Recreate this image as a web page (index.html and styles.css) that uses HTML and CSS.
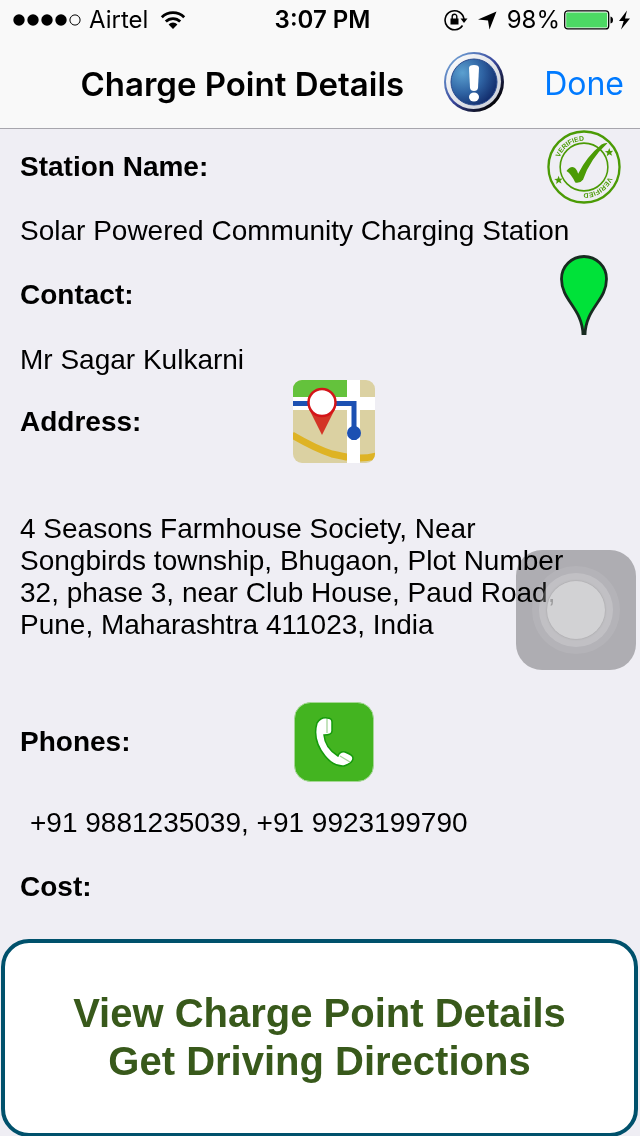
FILE: index.html
```html
<!DOCTYPE html>
<html lang="en">
<head>
<meta charset="utf-8">
<meta name="viewport" content="width=device-width, initial-scale=1">
<title>Charge Point Details</title>
<link rel="stylesheet" href="styles.css">
</head>
<body>
<div class="screen">
  <header class="top">
    <div class="status">
      <div class="status-left">
        <svg class="signal" width="68" height="14" viewBox="0 0 68 14"><circle cx="6" cy="7" r="5.7"/><circle cx="20" cy="7" r="5.7"/><circle cx="34" cy="7" r="5.7"/><circle cx="48" cy="7" r="5.7"/><circle cx="62" cy="7" r="5.1" fill="none" stroke="#000"/></svg>
        <span>Airtel</span>
        <svg class="wifi" width="26" height="20" viewBox="0 0 26 20"><g fill="none" stroke="#000" stroke-width="2.8"><path d="M1.8 7.2a16 16 0 0 1 22.4 0"/><path d="M5.8 11.6a10.2 10.2 0 0 1 14.4 0"/></g><path d="M8.6 14.4a6.3 6.3 0 0 1 8.8 0L13 19z"/></svg>
      </div>
      <time class="clock">3:07 PM</time>
      <div class="status-right">
        <svg width="24" height="22" viewBox="0 0 24 22"><path d="M18.5 16.5A9.5 9.5 0 1 1 20 10" fill="none" stroke="#000" stroke-width="1.6"/><path d="M16.500 9.500h7l-3.500 4.500z"/><rect x="6.500" y="9.500" width="8" height="6"/><path d="M8.200 10V7.500a2.300 2.300 0 0 1 4.600 0V10" fill="none" stroke="#000" stroke-width="1.400"/></svg>
        <svg class="arrow" width="19" height="19" viewBox="0 0 19 19"><path d="M18.500.5 11.500 18.500 10 9.500 0 8.500z"/></svg>
        <span>98%</span>
        <svg class="battery" width="68" height="20" viewBox="0 0 68 20"><rect x=".7" y=".9" width="44" height="18" rx="3" fill="#fff" stroke="#000" stroke-width="1.3"/><rect x="2.200" y="2.400" width="41" height="15" rx="1" fill="#4cd964"/><path d="M46.500 6.500q2.500.5 2.500 3.500t-2.500 3.500z"/><path d="M63 .5 55 11h4.700L57 19.500 66 8.500h-5z"/></svg>
      </div>
    </div>
    <nav class="nav">
      <h1 class="title">Charge Point Details</h1>
      <button class="info" type="button" aria-label="Information">
        <svg width="60" height="60" viewBox="0 0 60 60">
          <defs>
            <linearGradient id="rim" x1="0" y1="0" x2="1" y2="1"><stop offset="0" stop-color="#80b9e3"/><stop offset=".5" stop-color="#37459b"/><stop offset=".85" stop-color="#050508"/></linearGradient>
            <linearGradient id="ring" x1="0" y1="0" x2="1" y2="1"><stop offset="0" stop-color="#fff"/><stop offset="1" stop-color="#c8ccd6"/></linearGradient>
            <radialGradient id="disc" cx=".25" cy=".3" r=".8"><stop offset="0" stop-color="#5ba0d0"/><stop offset=".55" stop-color="#2f63a3"/><stop offset="1" stop-color="#122d6d"/></radialGradient>
          </defs>
          <circle cx="30" cy="30" r="30" fill="url(#rim)"/><circle cx="29.500" cy="29.500" r="27.500" fill="url(#ring)"/>
          <circle cx="30" cy="30" r="23" fill="url(#disc)" stroke="#294a8e" stroke-width="1"/>
          <path d="M25 16q0-3 5-3t5 3l-1 20q-.5 3-4 3t-4-3z" fill="#fff"/><ellipse cx="30" cy="45" rx="5" ry="4.500" fill="#fff"/>
        </svg>
      </button>
      <a class="done" href="#">Done</a>
    </nav>
  </header>

  <main class="details">
    <section class="station">
      <div class="head">
        <h2>Station Name:</h2>
        <svg class="side" width="74" height="74" viewBox="0 0 76 76" role="img" aria-label="Verified">
          <g fill="none" stroke="#4b9b05"><circle cx="38" cy="38" r="36.500" stroke-width="2.400"/><circle cx="38" cy="38" r="24.500" stroke-width="1.600"/></g>
          <path id="arc" d="M11 38a27 27 0 0 1 54 0a27 27 0 0 1-54 0a27 27 0 0 1 54 0" fill="none"/>
          <g class="seal"><text><textPath href="#arc" startOffset="10">VERIFIED</textPath></text><text><textPath href="#arc" startOffset="95">VERIFIED</textPath></text></g>
          <g fill="#4b9b05"><path d="m64 18.500 1 3 3-.2-2.200 2.200 1.200 3-3-1.500-2.600 2 .6-3.300-2.600-1.800 3.300-.4z"/><path d="m12 47 1 3 3-.2-2.200 2.200 1.200 3-3-1.500-2.600 2 .6-3.300-2.600-1.800 3.300-.4z"/>
          <path d="M20 42q3-4 6-4 4 0 6 7 9-18 24-30 3-2 6-1.500Q44 30 37 51q-3 4-8 3-4-9-9-12z"/></g>
        </svg>
      </div>
      <p>Solar Powered Community Charging Station</p>
    </section>

    <section class="contact">
      <div class="head">
        <h2>Contact:</h2>
        <svg class="side" width="48" height="80" viewBox="0 0 48 80"><path d="M23 80C22.500 53 1.500 46 1.500 24a22.500 22.500 0 0 1 45 0C46.500 46 25.500 53 25 80" fill="#00e239" stroke="#182b20" stroke-width="2.800"/></svg>
      </div>
      <p>Mr Sagar Kulkarni</p>
    </section>

    <section class="address">
      <div class="head">
        <h2>Address:</h2>
        <button class="tile" type="button" aria-label="Show on map">
          <svg width="84" height="84" viewBox="0 0 84 84">
            <clipPath id="round"><rect x="1" width="82" height="83" rx="9"/></clipPath>
            <g clip-path="url(#round)"><rect width="84" height="84" fill="#dbd1a2"/><path d="M0 0h55v17H0z" fill="#64c23c"/><path d="M0 17h84v13H0zM55 0h13v84H55z" fill="#fff"/>
            <path d="M0 55q24 14 40 19 14 3 15 3M68 78q8 0 16-2" fill="none" stroke="#deb324" stroke-width="7"/></g>
            <path d="M1 23.500h61V60" fill="none" stroke="#1c50b2" stroke-width="5"/><circle cx="62" cy="53" r="7" fill="#1c50b2"/>
            <path d="M17 29 30 55l13-26z" fill="#d33526"/><circle cx="30" cy="22.500" r="13.500" fill="#fff" stroke="#d41418" stroke-width="2.500"/>
          </svg>
        </button>
      </div>
      <p>4 Seasons Farmhouse Society, Near Songbirds township, Bhugaon, Plot Number 32, phase 3, near Club House, Paud Road, Pune, Maharashtra 411023, India</p>
    </section>

    <section class="phones">
      <div class="head">
        <h2>Phones:</h2>
        <button class="tile" type="button" aria-label="Call">
          <svg width="80" height="80" viewBox="0 0 80 80"><rect x=".5" y=".5" width="79" height="79" rx="16" fill="#43b420" stroke="#a5d795"/><path d="M23 21Q27 15 33 16q5 0 5 4v9q0 4-8 4 1 13 14 21 2-5 7-4 8 3 8 6 0 5-9 8-10 1-19-10Q18 38 23 21z" fill="#fff" stroke="#159a0b" stroke-width="1.500"/><path d="M33 17v14M46 54l10 6" stroke="#a5d59a" stroke-width="1.300"/></svg>
        </button>
      </div>
      <p>+91 9881235039, +91 9923199790</p>
    </section>

    <section class="cost"><h2>Cost:</h2></section>
  </main>

  <button class="actions" type="button">View Charge Point Details<br>Get Driving Directions</button>

  <button class="assist" type="button" aria-label="AssistiveTouch"><span class="halo"><span class="ring"><span class="knob"></span></span></span></button>
</div>
</body>
</html>
```
FILE: styles.css
```css
* { box-sizing: border-box; }
body {
  margin: 0;
  background: #efeef4;
  color: #000;
  font: 28px/32px "Liberation Sans", Helvetica, Arial, sans-serif;
}
h1, h2, p { margin: 0; }
svg { display: block; flex: none; }
button { padding: 0; border: 0; background: none; font: inherit; cursor: pointer; }
.screen { position: relative; display: flex; flex-direction: column; min-height: 100vh; }

.top {
  background: #f9f9f9;
  border-bottom: 1px solid #a7a6ad;
  font-family: Inter, Roboto, sans-serif;
}
.status {
  display: grid;
  grid-template-columns: 1fr auto 1fr;
  align-items: center;
  height: 40px;
  padding: 0 8px 0 13px;
  font-size: 24px;
}
.status-left, .status-right { display: flex; align-items: center; }
.status-left { gap: 8px; }
.wifi { margin-left: 4px; }
.clock { font-weight: 600; }
.status-right { justify-content: flex-end; gap: 4px; }
.arrow { margin: 0 6px; }
.nav {
  display: flex;
  align-items: center;
  justify-content: flex-end;
  gap: 40px;
  height: 88px;
  padding: 0 16px 4px;
}
.title { padding-top: 4px; font-size: 33px; font-weight: 600; line-height: 40px; }
.done { padding-top: 4px; color: #007aff; font-size: 32px; line-height: 40px; text-decoration: none; }

.details { flex: 1; padding: 1px 16px 0 20px; }
.head {
  display: grid;
  grid-template-columns: 45% 84px 1fr 80px;
  align-items: center;
}
h2 { font-size: 28px; font-weight: 700; line-height: 32px; }
.tile, .side { justify-self: center; }
.side { grid-column: 4; }
.head h2 { grid-row: 1; grid-column: 1; }
.seal { fill: #4b9b05; font: 700 7px "Liberation Sans", sans-serif; }
.station p { padding: 11px 0 8px; }
.contact p { padding: 9px 0 4px; }
.address p { padding: 49px 16px 61px 0; }
.phones p { padding: 25px 0 32px 10px; }

.actions {
  margin: 36px 2px 0 1px;
  padding: 46px 16px 48px;
  border: 4px solid #00516c;
  border-radius: 28px;
  background: #fff;
  color: #38591b;
  font-size: 40px;
  font-weight: 700;
  line-height: 48px;
}

.assist {
  position: absolute;
  right: 4px;
  top: 550px;
  display: grid;
  place-items: center;
  width: 120px;
  height: 120px;
}
/* Multiplied so that the text under the panel stays dark. */
.assist::before {
  content: "";
  position: absolute;
  inset: 0;
  border-radius: 26px;
  background: #bababa;
  mix-blend-mode: multiply;
}
.halo, .ring, .knob { display: grid; place-items: center; border-radius: 50%; }
.halo { position: relative; width: 88px; height: 88px; background: rgba(255, 255, 255, 0.08); }
.ring { width: 74px; height: 74px; background: rgba(255, 255, 255, 0.18); }
.knob { width: 58px; height: 58px; background: rgba(222, 222, 224, 0.6); box-shadow: 0 0 2px #999; }
```
